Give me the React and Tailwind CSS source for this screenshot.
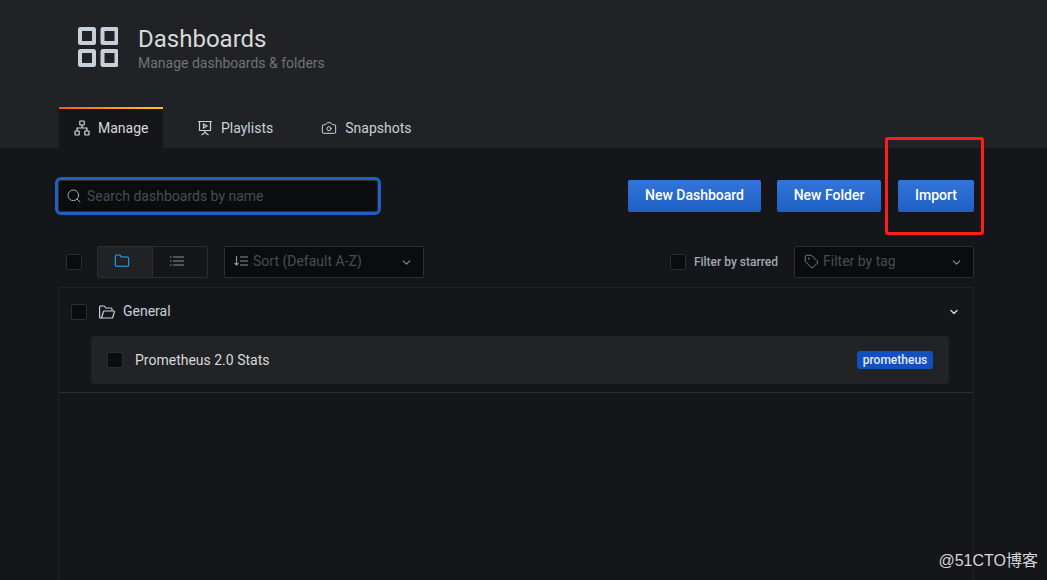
import { ChevronDown, Search, Folder, Camera, Tag } from "lucide-react";

function Checkbox({ className = "" }) {
  return <div className={`w-4 h-4 shrink-0 rounded-[2px] border border-[#2c2d31] bg-[#0b0c0e] ${className}`} />;
}

function DashboardsIcon() {
  return (
    <svg width="40" height="40" viewBox="0 0 40 40" fill="none" stroke="#c7d0d9" strokeWidth="4" strokeLinejoin="round" className="shrink-0">
      <rect x="2" y="2" width="14" height="14" rx="0.5" />
      <rect x="24.5" y="2" width="14" height="14" rx="0.5" />
      <rect x="2" y="24" width="14" height="14" rx="0.5" />
      <rect x="24.5" y="24" width="14" height="14" rx="0.5" />
    </svg>
  );
}

function SitemapIcon() {
  return (
    <svg width="16" height="16" viewBox="0 0 16 16" fill="none" stroke="#d8d9da" strokeWidth="1.2">
      <rect x="5.8" y="1" width="4.4" height="4" rx="0.5" />
      <rect x="1" y="11" width="4.2" height="4" rx="0.5" />
      <rect x="10.8" y="11" width="4.2" height="4" rx="0.5" />
      <path d="M8 5v3M3.1 11V8h9.8v3" />
    </svg>
  );
}

function PlaylistIcon() {
  return (
    <svg width="16" height="16" viewBox="0 0 16 16" fill="none" stroke="#c7d0d9" strokeWidth="1.2">
      <path d="M1 1.5h14M2.5 1.5v9h11v-9M8 10.5v2M4.5 15l3.5-2.5 3.5 2.5" />
      <path d="M6.5 4l3.5 2-3.5 2z" />
    </svg>
  );
}

function OpenFolderIcon() {
  return (
    <svg width="16" height="14" viewBox="0 0 16 14" fill="none" stroke="#c7d0d9" strokeWidth="1.2" strokeLinejoin="round" className="ml-[12px] shrink-0">
      <path d="M2.5 13H1.6a1 1 0 0 1-1-1V2a1 1 0 0 1 1-1h3.6l1.6 2h5.2a1 1 0 0 1 1 1v2" />
      <path d="M2.5 13l2-6.5a.7.7 0 0 1 .7-.5h9.5a.7.7 0 0 1 .7.9l-1.7 5.6a.7.7 0 0 1-.7.5z" />
    </svg>
  );
}

function ListIcon() {
  return (
    <svg width="14" height="14" viewBox="0 0 14 14" fill="none" stroke="#8e8e8e" strokeWidth="1.2" className="shrink-0">
      <path d="M0 3h1.5M0 7h1.5M0 11h1.5M3 3h11M3 7h11M3 11h11" />
    </svg>
  );
}

function SortIcon() {
  return (
    <svg width="14" height="14" viewBox="0 0 14 14" fill="none" stroke="#8e8e8e" strokeWidth="1.2" className="shrink-0">
      <path d="M2.5 2v9M0.6 9l1.9 2.2L4.4 9M6 3h8M6 7h8M6 11h8" />
    </svg>
  );
}

function Tab({ active, icon, label, className = "" }) {
  if (active) {
    return (
      <div className="relative flex items-center gap-2 h-[41px] w-[104px] pl-[15px] bg-[#141619] text-[#d8d9da] rounded-t-[2px]">
        <div className="absolute left-0 right-0 top-0 h-[2px] bg-gradient-to-r from-[#f05a28] to-[#fbca0a]" />
        {icon}
        <span>{label}</span>
      </div>
    );
  }
  return (
    <div className={`flex items-center gap-2 h-[41px] px-6 text-[#c7d0d9] ${className}`}>
      {icon}
      <span>{label}</span>
    </div>
  );
}

function BlueButton({ label, className }) {
  return (
    <button className={`h-8 pb-[2px] rounded-[2px] bg-gradient-to-b from-[#3274d9] to-[#1f60c4] text-white text-sm font-medium ${className}`}>
      {label}
    </button>
  );
}

export default function App() {
  return (
    <div className="relative w-[1047px] h-[580px] overflow-hidden bg-[#141619] text-sm font-['Roboto',sans-serif]">
      <header className="h-[148px] bg-[#202226] pl-[59px]">
        <div className="flex items-center gap-5 h-[107px] pl-[19px] pb-[13px]">
          <DashboardsIcon />
          <div className="mt-[2px]">
            <h1 className="text-2xl leading-[30px] text-[#d8d9da]">Dashboards</h1>
            <p className="text-sm leading-[17px] mt-[1px] text-[#6f7278]">Manage dashboards &amp; folders</p>
          </div>
        </div>
        <nav className="flex">
          <Tab active icon={<SitemapIcon />} label="Manage" />
          <Tab icon={<PlaylistIcon />} label="Playlists" className="ml-[10px]" />
          <Tab icon={<Camera size={16} strokeWidth={1.5} className="text-[#c7d0d9]" />} label="Snapshots" />
        </nav>
      </header>

      <main className="pl-[58px] pr-[73px]">
        <div className="flex items-center justify-between h-[96px]">
          <div className="flex items-center gap-[5px] w-[320px] h-8 pl-[7px] rounded-[3px] border border-[#2c2d31] bg-[#0b0c0e] outline-[3px] outline-offset-[0.5px] outline-[#1f60c4] text-[#464c54]">
            <Search size={16} strokeWidth={1.5} className="text-[#9fa7b3]" />
            <span className="text-sm">Search dashboards by name</span>
          </div>
          <div className="flex">
            <BlueButton label="New Dashboard" className="w-[133px]" />
            <BlueButton label="New Folder" className="w-[104px] ml-4" />
            <BlueButton label="Import" className="w-[76px] ml-[17px]" />
          </div>
        </div>

        <div className="flex items-center h-8 mt-[2px] pl-2">
          <Checkbox />
          <div className="flex ml-[15px] w-[111px] h-8 rounded-[2px] border border-[#2c2d31]">
            <div className="flex items-center justify-center w-[55px] pr-[6px] pb-[2px] bg-[#202226] border-r border-[#2c2d31]">
              <Folder size={16} strokeWidth={1.6} className="text-[#33a2e5]" />
            </div>
            <div className="flex flex-1 items-center justify-center pr-[7px] pb-[2px]">
              <ListIcon />
            </div>
          </div>
          <div className="flex items-center justify-between ml-4 w-[200px] h-8 pl-[9px] pr-[10px] rounded-[2px] border border-[#2c2d31] bg-[#0b0c0e]">
            <div className="flex items-center gap-[5px] pb-[2px] text-[#464c54]">
              <SortIcon />
              <span>Sort (Default A-Z)</span>
            </div>
            <ChevronDown size={13} strokeWidth={2} className="text-[#8e8e8e]" />
          </div>
          <div className="flex items-center ml-auto">
            <Checkbox />
            <span className="ml-2 text-xs font-medium text-[#9fa7b3]">Filter by starred</span>
            <div className="flex items-center justify-between ml-4 w-[180px] h-8 pl-[9px] pr-[10px] rounded-[2px] border border-[#2c2d31] bg-[#0b0c0e]">
              <div className="flex items-center gap-1 pb-[2px] text-[#464c54]">
                <Tag size={15} strokeWidth={1.4} className="text-[#8e8e8e]" />
                <span>Filter by tag</span>
              </div>
              <ChevronDown size={13} strokeWidth={2} className="text-[#8e8e8e]" />
            </div>
          </div>
        </div>

        <section className="mt-[9px] h-[320px] border border-[#202226]">
          <div className="h-[105px] border-b border-[#2c2d31]">
            <div className="flex items-center h-[47px] pl-3 pr-[13px]">
              <Checkbox />
              <OpenFolderIcon />
              <span className="ml-2 pb-[2px] text-[#c7d0d9]">General</span>
              <ChevronDown size={12} strokeWidth={3} className="ml-auto text-[#c7d0d9]" />
            </div>
            <div className="flex items-center h-12 mt-[1px] ml-8 mr-6 pl-4 pr-4 rounded-[3px] bg-[#212327]">
              <Checkbox />
              <span className="ml-3 text-[#d8d9da]">Prometheus 2.0 Stats</span>
              <span className="ml-auto h-[18px] w-[76px] rounded-[3px] bg-[#1250bd] text-center text-xs leading-[18px] font-medium text-[#e3e9f5]">prometheus</span>
            </div>
          </div>
        </section>
      </main>

      {/* red annotation drawn over the screenshot */}
      <div className="absolute left-[885px] top-[137px] w-[99px] h-[98px] rounded-[3px] border-[3px] border-[#fb1f17]" />
      <div className="absolute right-[9px] bottom-[9px] text-base leading-[20px] text-[#d6d6d6] font-['Liberation_Sans','Noto_Sans_CJK_SC',sans-serif]">@51CTO博客</div>
    </div>
  );
}
